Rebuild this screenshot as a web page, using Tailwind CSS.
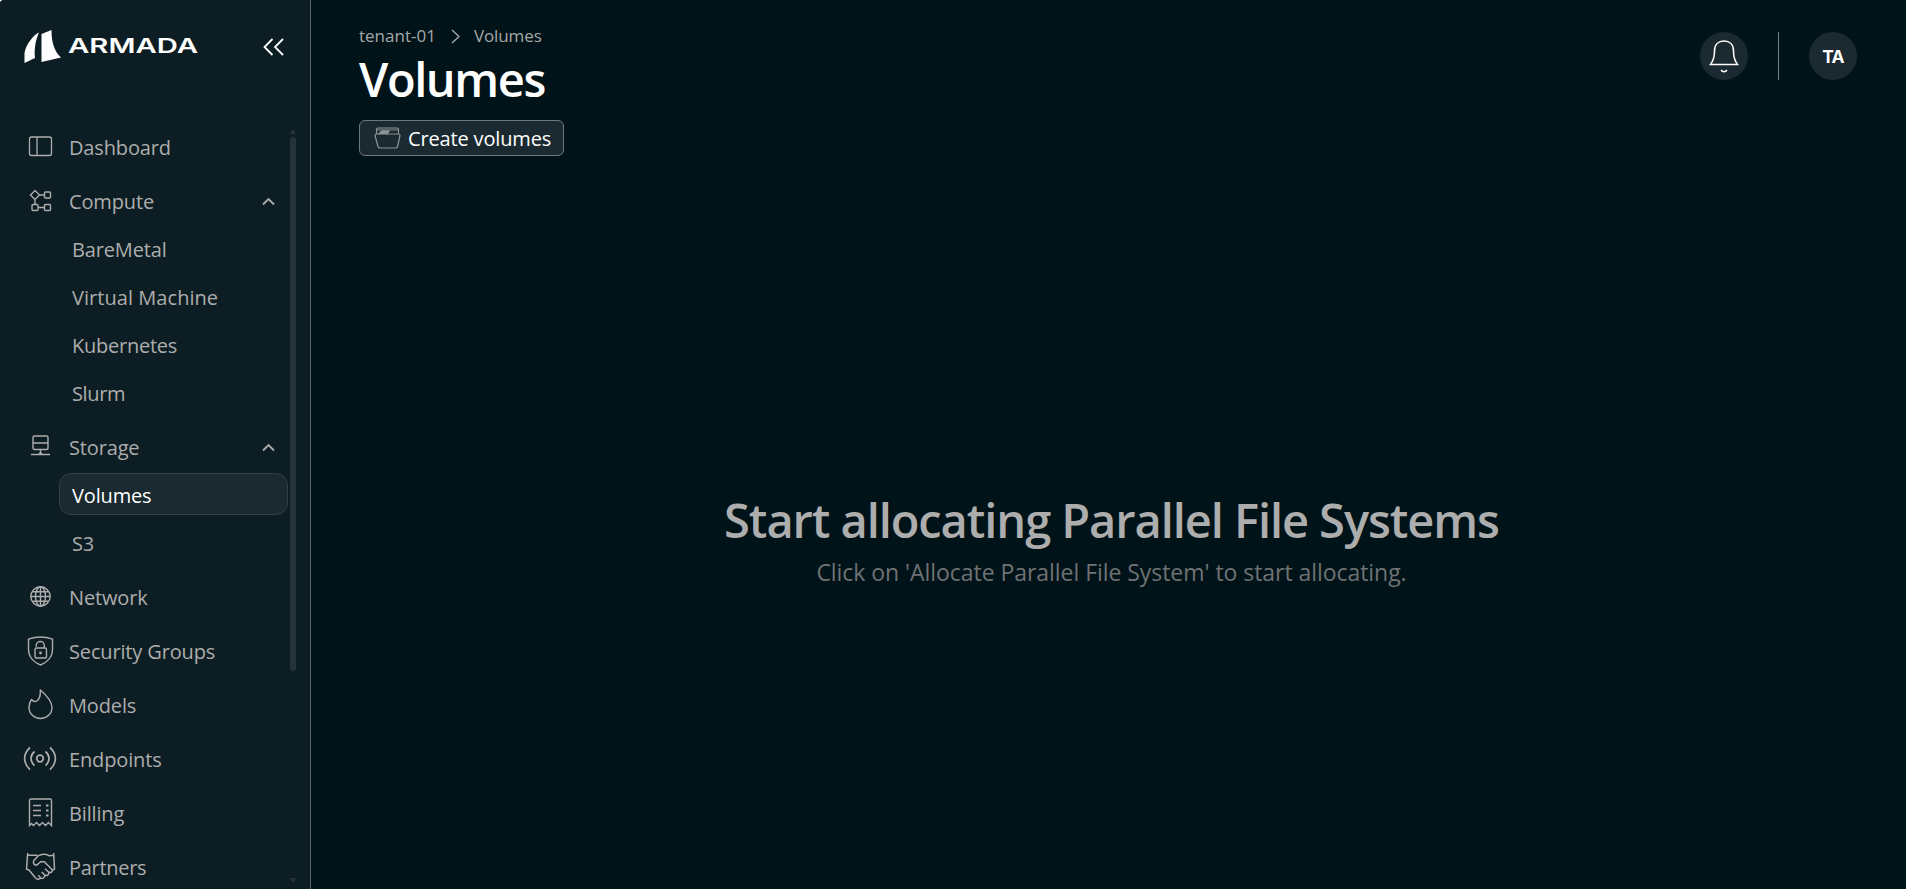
<!DOCTYPE html>
<html lang="en">
<head>
    <meta charset="UTF-8">
    <meta name="viewport" content="width=device-width, initial-scale=1.0">
    <title>Volumes</title>
    <script src="https://cdn.jsdelivr.net/npm/@tailwindcss/browser@4"></script>
</head>
<body class="bg-white font-['Open_Sans',sans-serif]">

    <div class="flex h-screen overflow-hidden rounded-tl-[4px] bg-[#001318]">
        <!-- Sidebar -->
        <aside class="flex w-[311px] shrink-0 flex-col border-r border-[#5f6466] bg-[#0c1d23]">
            <div class="flex h-[122px] shrink-0 items-start justify-between pl-6 pr-[26px] pt-[29px]">
                <svg class="h-9 w-[176px]" viewBox="0 0 176 36" fill="#fff">
                    <path d="M15 3.500C10 5.500 2 15 .5 24L.5 34L11 29C10 20 11.500 11 15 3.500Z"/>
                    <path d="M17.500 5L27.500 1C27.500 13 30 22 37 28.500L17.500 33Z"/>
                    <text x="44" y="23.800" font-family="Inter, sans-serif" font-size="20.500" font-weight="600" textLength="130" lengthAdjust="spacingAndGlyphs">ARMADA</text>
                </svg>
                <button>
                    <svg class="mt-[9px] h-[18px] w-[21px]" viewBox="0 0 21 18" fill="none" stroke="#fff" stroke-width="1.8">
                        <path d="M9.500 1L1.500 9L9.500 17M20 1L12 9L20 17"/>
                    </svg>
                </button>
            </div>

            <div class="flex min-h-0 flex-1">
                <nav class="w-[290px] overflow-hidden text-xl tracking-[-0.15px] text-[#adadad]">
                    <ul class="space-y-1.5">
                        <li class="flex h-12 items-center pl-6">
                            <svg class="mr-[13px] size-8" viewBox="0 0 32 32" fill="none" stroke="currentColor" stroke-width="1.300"><rect x="5.500" y="7" width="22" height="18.500" rx="2"/><path d="M13 7V25.500"/></svg>
                            <a href="#" class="pt-[3px]">Dashboard</a>
                        </li>
                        <li>
                            <div class="flex h-12 items-center pl-6 pr-[15px]">
                                <svg class="mr-[13px] size-8" viewBox="0 0 32 32" fill="none" stroke="currentColor" stroke-width="1.400"><path d="M11 6.500L15.500 11L11 15.500L6.500 11ZM15.500 11H20.500M11 15.500V20.500M14 23.500H20.500"/><rect x="20.500" y="8" width="6" height="6" rx="1"/><rect x="8" y="20.500" width="6" height="6" rx="1"/><rect x="20.500" y="20.500" width="6" height="6" rx="1"/></svg>
                                <a href="#" class="flex-1 pt-[3px]">Compute</a>
                                <svg class="mt-[3px] h-[9px] w-[13px]" viewBox="0 0 13 9" fill="none" stroke="currentColor" stroke-width="1.800"><path d="M1 7.500L6.500 2L12 7.500"/></svg>
                            </div>
                            <ul class="pl-[59px]">
                                <li class="flex h-12 items-center pl-[13px] pt-[3px]"><a href="#">BareMetal</a></li>
                                <li class="flex h-12 items-center pl-[13px] pt-[3px]"><a href="#" class="tracking-[0.05px]">Virtual Machine</a></li>
                                <li class="flex h-12 items-center pl-[13px] pt-[3px]"><a href="#" class="tracking-[-0.25px]">Kubernetes</a></li>
                                <li class="flex h-12 items-center pl-[13px] pt-[3px]"><a href="#" class="tracking-[-0.35px]">Slurm</a></li>
                            </ul>
                        </li>
                        <li>
                            <div class="flex h-12 items-center pl-6 pr-[15px]">
                                <svg class="mr-[13px] size-8" viewBox="0 0 32 32" fill="none" stroke="currentColor" stroke-width="1.400"><rect x="9" y="6" width="15" height="13.500" rx="1.500"/><path d="M9 13H24M16.500 19.500V24.500M7 24.500H26M15 24.500a1.500 1.500 0 0 1 3 0"/></svg>
                                <a href="#" class="flex-1 pt-[3px]">Storage</a>
                                <svg class="mt-[3px] h-[9px] w-[13px]" viewBox="0 0 13 9" fill="none" stroke="currentColor" stroke-width="1.800"><path d="M1 7.500L6.500 2L12 7.500"/></svg>
                            </div>
                            <ul class="pl-[59px]">
                                <li class="flex h-12 items-center"><a href="#" class="flex h-[42px] w-[229px] items-center rounded-xl border border-[#343f43] bg-[#1b2a30] pt-[3px] pl-3 text-white">Volumes</a></li>
                                <li class="flex h-12 items-center pl-[13px] pt-[3px]"><a href="#">S3</a></li>
                            </ul>
                        </li>
                        <li class="flex h-12 items-center pl-6">
                            <svg class="mr-[13px] size-8" viewBox="0 0 32 32" fill="none" stroke="currentColor" stroke-width="1.400"><circle cx="16.500" cy="16.500" r="9.700"/><ellipse cx="16.500" cy="16.500" rx="5" ry="9.700"/><path d="M16.500 6.800V26.200M6.800 16.500H26.200M8.500 11.700H24.500M8.500 21.300H24.500"/></svg>
                            <a href="#" class="pt-[3px]">Network</a>
                        </li>
                        <li class="flex h-12 items-center pl-6">
                            <svg class="mr-[13px] size-8" viewBox="0 0 32 32" fill="none" stroke="currentColor" stroke-width="1.400"><path d="M4.500 5.200C12 2.500 21 2.500 28.500 5.200V15.500C28.500 23 23 28.500 16.500 31C10 28.500 4.500 23 4.500 15.500Z"/><rect x="11" y="14" width="11.500" height="10" rx="1.500"/><path d="M12.200 12.700V11.500a4 4 0 0 1 8.100 0V14"/><circle cx="16.500" cy="19" r="1.400" fill="currentColor" stroke="none"/></svg>
                            <a href="#" class="pt-[3px]">Security Groups</a>
                        </li>
                        <li class="flex h-12 items-center pl-6">
                            <svg class="mr-[13px] size-8" viewBox="0 0 32 32" fill="none" stroke="currentColor" stroke-width="1.400" stroke-linejoin="round"><path d="M16.300 2C21 6 28 12.500 28 19.500A11.500 11 0 0 1 5 19.500C5 16.500 6 13.500 7.500 11.500C9 13.500 11.500 14 13.500 12.500C16.500 10 16.500 5.500 16.300 2Z"/></svg>
                            <a href="#" class="pt-[3px]">Models</a>
                        </li>
                        <li class="flex h-12 items-center pl-[23px]">
                            <svg class="mr-[12px] h-8 w-[34px]" viewBox="0 0 34 32" fill="none" stroke="currentColor" stroke-width="1.700"><circle cx="17" cy="16.500" r="3.300"/><path d="M11.500 9.500C6.800 13.500 6.800 19.500 11.500 23.500M22.500 9.500C27.200 13.500 27.200 19.500 22.500 23.500M7 5.500C-.2 12-.2 21 7 27.500M27 5.500C34.200 12 34.200 21 27 27.500"/></svg>
                            <a href="#" class="pt-[3px]">Endpoints</a>
                        </li>
                        <li class="flex h-12 items-center pl-6">
                            <svg class="mr-[13px] size-8" viewBox="0 0 32 32" fill="none" stroke="currentColor" stroke-width="1.400"><path d="M5.500 29.500V4.500A1.500 1.500 0 0 1 7 3H26A1.500 1.500 0 0 1 27.500 4.500V29.500L24.500 26.500L21.500 29.500L18.500 26.500L15.500 29.500L12.500 26.500L9.500 29.500L7.500 27.500ZM9 9.500H17M9 14.500H17M9 19.500H17"/><path d="M22 9.500H24.500M22 14.500H24.500M22 19.500H24.500" stroke-width="2"/></svg>
                            <a href="#" class="pt-[3px]">Billing</a>
                        </li>
                        <li class="flex h-12 items-center pl-6">
                            <svg class="mr-[13px] size-8" viewBox="0 0 32 32" fill="none" stroke="currentColor" stroke-width="1.500" stroke-linejoin="round"><path d="M3.700 3L2.500 19.300L5 20L11 27.300C12.500 29.500 15 29.800 16.700 28M29.700 3L30.500 19.300L28 20M3.700 5.200H13.500M29.700 5.200L25.300 5.700C20.500 3.500 17 4 14 6L9.700 10.700C8.500 14 11 16 13.500 14.500L16.700 11.700H20.300L28 19.500C29 21.500 27 23.500 24.500 22L21 18.800M24.500 22C25.500 24.700 23 26.500 20.700 25L17.700 22M20.700 25C21 27.500 18.500 29.500 16.700 28L14.300 25.300"/></svg>
                            <a href="#" class="pt-[3px] tracking-[-0.3px]">Partners</a>
                        </li>
                    </ul>
                </nav>
                <!-- Scrollbar -->
                <div class="flex w-1.5 flex-col items-center pt-[7px] pb-1.5">
                    <svg class="h-[5px] w-1.5" viewBox="0 0 6 5" fill="#25343a"><path d="M3 0L6 5H0Z"/></svg>
                    <div class="mt-[3px] h-[534px] w-1.5 rounded-full bg-[#25343a]"></div>
                    <svg class="mt-auto h-[5px] w-1.5" viewBox="0 0 6 5" fill="#25343a"><path d="M3 5L6 0H0Z"/></svg>
                </div>
            </div>
        </aside>

        <!-- Main Content -->
        <main class="flex flex-1 flex-col pl-12 pr-[42px]">
            <header class="flex h-[156px] shrink-0 items-start justify-between pr-[7px]">
                <div class="pt-6">
                    <div class="flex h-6 items-center text-[17px] text-[#a5a8a9]">
                        <a href="#">tenant-01</a>
                        <svg class="ml-[15px] mr-[14px] h-[15px] w-[9px]" viewBox="0 0 9 15" fill="none" stroke="currentColor" stroke-width="1.400"><path d="M1 1L8 7.500L1 14"/></svg>
                        <span class="tracking-[-0.1px]">Volumes</span>
                    </div>
                    <h1 class="h-[72px] text-[47px] leading-[62px] font-semibold tracking-[-1.4px] text-white">Volumes</h1>
                    <button class="flex h-9 w-[205px] items-center rounded-md border border-[#6f777a] bg-[#1b2a30] pl-3.5 text-xl tracking-[-0.15px] text-white">
                        <svg class="mr-[7px] h-[22px] w-[27px]" viewBox="0 0 27 22" fill="none" stroke="#8d9496" stroke-width="1.200" stroke-linejoin="round"><path d="M2.500 7V2.500A1.500 1.500 0 0 1 4 1H23A1.500 1.500 0 0 1 24.500 2.500V7M1 8.500Q1 7 2.500 7H5L8 4H15L13 7H24.500Q26 7 26 8.500L23.500 19.500Q23 21 21.500 21H6Q4.500 21 4 19.500Z"/><path d="M5 7L8 4H15L13 7Z" fill="#8d9496"/><path d="M3 2.800H24.500" stroke-opacity=".5" stroke-width="2"/></svg>
                        <span class="pt-0.5">Create volumes</span>
                    </button>
                </div>
                <div class="flex items-center pt-8">
                    <button class="flex size-12 items-center justify-center rounded-full bg-[#1b2a30]">
                        <svg class="h-[34px] w-[30px]" viewBox="0 0 30 34" fill="none" stroke="#fff" stroke-width="1.500"><path d="M1.500 25.500C5 21 5.500 18 5.500 12C5.500 5.500 9.500 2 15 2S24.500 5.500 24.500 12C24.500 18 25 21 28.500 25.500ZM12 31C13.500 33.300 16.500 33.300 18 31"/></svg>
                    </button>
                    <div class="ml-[30px] mr-[30px] h-12 w-px bg-[#7b8183]"></div>
                    <div class="flex size-12 items-center justify-center rounded-full bg-[#1b2a30] pt-0.5 font-['Inter',sans-serif] text-[17.5px] font-bold tracking-[-0.8px] text-white">TA</div>
                </div>
            </header>

            <!-- Empty state -->
            <section class="flex flex-1 flex-col items-center pt-[332px]">
                <h2 class="h-16 text-[47px] leading-[64px] font-semibold tracking-[-1.07px] text-[#adadad]">Start allocating Parallel File Systems</h2>
                <p class="mt-1 h-8 text-[23px] leading-8 tracking-[-0.05px] text-[#6f7274]">Click on 'Allocate Parallel File System' to start allocating.</p>
            </section>
        </main>
    </div>

</body>
</html>
